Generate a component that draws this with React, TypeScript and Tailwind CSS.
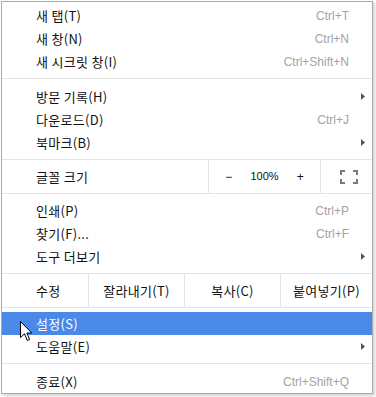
import React from "react";

const FONT = { fontFamily: '"Noto Sans CJK KR", "Liberation Sans", sans-serif' };
const LATIN = { fontFamily: '"Liberation Sans", Arial, sans-serif' };

function Arrow() {
  return (
    <svg width="4" height="7" viewBox="0 0 4 7" className="block">
      <path d="M0 0 L4 3.5 L0 7 Z" fill="#555555" />
    </svg>
  );
}

type ItemProps = { label: string; shortcut?: string; sub?: boolean; active?: boolean };

function Item({ label, shortcut, sub, active }: ItemProps) {
  return (
    <div
      className={`flex h-[23px] items-center pl-[34px] pr-[7px] ${
        active ? "bg-[#4a89e8] text-white" : "text-[#111111]"
      }`}
    >
      <span className="flex-1 text-[13px] leading-none tracking-[0.3px]" style={FONT}>
        {label}
      </span>
      {shortcut && (
        <span className="text-[12px] leading-none text-[#a3a3a3]" style={LATIN}>
          {shortcut}
        </span>
      )}
      <span className="flex w-[16px] justify-end">{sub && <Arrow />}</span>
    </div>
  );
}

function Sep() {
  return <div className="mt-[5px] mb-[6px] h-px bg-[#e4e4e4]" />;
}

function FullscreenIcon() {
  return (
    <svg width="18" height="14" viewBox="0 0 18 14" className="block">
      <g fill="none" stroke="#7a7a7a" strokeWidth="2">
        <path d="M1 5 V1 H5" />
        <path d="M13 1 H17 V5" />
        <path d="M17 9 V13 H13" />
        <path d="M5 13 H1 V9" />
      </g>
    </svg>
  );
}

function Cursor() {
  return (
    <svg width="13" height="21" viewBox="0 0 13 21" className="block">
      <path
        d="M0.5 0.5 L0.5 16.5 L4.5 12.8 L7.3 19.5 L9.6 18.5 L6.9 12 L11.8 12 Z"
        fill="#ffffff"
        stroke="#000000"
        strokeWidth="1"
        strokeLinejoin="miter"
      />
    </svg>
  );
}

export default function App() {
  return (
    <div className="relative h-[397px] w-[376px] overflow-hidden bg-white">
      <div className="ml-px mt-px w-[372px] border border-[#ababab] bg-white pt-[2px] shadow-[2px_2px_3px_rgba(0,0,0,0.18)]">
        <Item label="새 탭(T)" shortcut="Ctrl+T" />
        <Item label="새 창(N)" shortcut="Ctrl+N" />
        <Item label="새 시크릿 창(I)" shortcut="Ctrl+Shift+N" />
        <Sep />
        <Item label="방문 기록(H)" sub />
        <Item label="다운로드(D)" shortcut="Ctrl+J" />
        <Item label="북마크(B)" sub />

        <div className="mt-[5px] mb-[5px] flex h-[35px] border-y border-[#e4e4e4] text-[#111111]">
          <div
            className="flex flex-1 items-center pl-[34px] text-[13px] leading-none tracking-[0.3px]"
            style={FONT}
          >
            글꼴 크기
          </div>
          <div className="flex w-[112px] border-l border-[#e4e4e4] text-[12px] leading-none" style={LATIN}>
            <div className="flex w-[40px] items-center justify-center">−</div>
            <div className="flex w-[32px] items-center justify-center text-[11px]">100%</div>
            <div className="flex w-[40px] items-center justify-center">+</div>
          </div>
          <div className="flex w-[52px] items-center justify-end border-l border-[#e4e4e4] pr-[14px]">
            <FullscreenIcon />
          </div>
        </div>

        <Item label="인쇄(P)" shortcut="Ctrl+P" />
        <Item label="찾기(F)..." shortcut="Ctrl+F" />
        <Item label="도구 더보기" sub />

        <div
          className="mt-[5px] mb-[4px] flex h-[35px] border-y border-[#e4e4e4] text-[13px] leading-none tracking-[0.3px] text-[#111111]"
          style={FONT}
        >
          <div className="flex w-[86px] items-center pl-[34px]">수정</div>
          <div className="flex w-[96px] items-center justify-center border-l border-[#e4e4e4]">잘라내기(T)</div>
          <div className="flex w-[96px] items-center justify-center border-l border-[#e4e4e4]">복사(C)</div>
          <div className="flex flex-1 items-center justify-center border-l border-[#e4e4e4]">붙여넣기(P)</div>
        </div>

        <Item label="설정(S)" active />
        <Item label="도움말(E)" sub />
        <Sep />
        <Item label="종료(X)" shortcut="Ctrl+Shift+Q" />
      </div>

      <div className="absolute left-[20px] top-[321px]">
        <Cursor />
      </div>
    </div>
  );
}
